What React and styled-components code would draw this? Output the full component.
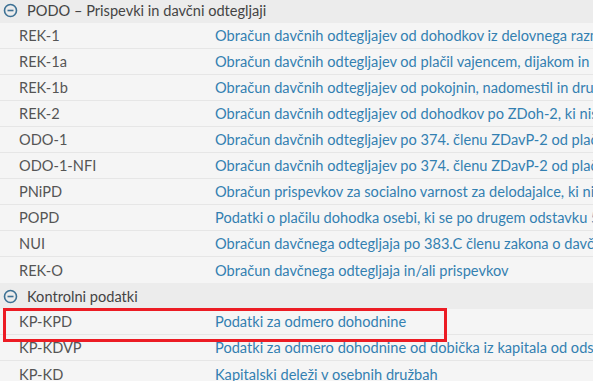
import React from "react";
import styled, { createGlobalStyle } from "styled-components";

const GlobalStyle = createGlobalStyle`
  html, body {
    margin: 0;
    padding: 0;
    background: #f5f5f5;
    overflow: hidden;
  }
  body {
    font-family: Lato, "Open Sans", sans-serif;
  }
`;

const groups = [
  {
    title: "PODO – Prispevki in davčni odtegljaji",
    items: [
      ["REK-1", "Obračun davčnih odtegljajev od dohodkov iz delovnega razmerja"],
      ["REK-1a", "Obračun davčnih odtegljajev od plačil vajencem, dijakom in študentom"],
      ["REK-1b", "Obračun davčnih odtegljajev od pokojnin, nadomestil in drugih dohodkov"],
      ["REK-2", "Obračun davčnih odtegljajev od dohodkov po ZDoh-2, ki niso iz delovnega razmerja"],
      ["ODO-1", "Obračun davčnih odtegljajev po 374. členu ZDavP-2 od plačil"],
      ["ODO-1-NFI", "Obračun davčnih odtegljajev po 374. členu ZDavP-2 od plačil nerezidentom"],
      ["PNiPD", "Obračun prispevkov za socialno varnost za delodajalce, ki niso izplačevalci"],
      ["POPD", "Podatki o plačilu dohodka osebi, ki se po drugem odstavku 58. člena"],
      ["NUI", "Obračun davčnega odtegljaja po 383.C členu zakona o davčnem postopku"],
      ["REK-O", "Obračun davčnega odtegljaja in/ali prispevkov"],
    ],
  },
  {
    title: "Kontrolni podatki",
    items: [
      ["KP-KPD", "Podatki za odmero dohodnine", true],
      ["KP-KDVP", "Podatki za odmero dohodnine od dobička iz kapitala od odsvojitve vrednostnih papirjev"],
      ["KP-KD", "Kapitalski deleži v osebnih družbah"],
    ],
  },
];

const Table = styled.div`
  margin-top: -3px;
  width: 100%;
`;

const GroupHeader = styled.div`
  display: flex;
  align-items: center;
  gap: 9px;
  height: 26px;
  padding-left: 3px;
  background: #ececec;
  color: #444;
  font-size: 14.6px;
  white-space: nowrap;
`;

const Row = styled.div`
  position: relative;
  display: grid;
  grid-template-columns: 215px minmax(0, 1fr);
  align-items: center;
  height: 26px;
  box-sizing: border-box;
  border-bottom: 1px solid #e6e6e6;
  background: #f5f5f5;
  font-size: 14.6px;
  white-space: nowrap;

  &:last-child {
    border-bottom: none;
  }
`;

const Code = styled.span`
  padding-left: 19px;
  color: #555;
`;

const Description = styled.span`
  color: #3380b1;
  overflow: hidden;
`;

/* red frame drawn over the marked row, spilling onto its neighbours */
const Highlight = styled.div`
  position: absolute;
  z-index: 1;
  left: 3px;
  top: -1px;
  width: 444px;
  height: 34px;
  box-sizing: border-box;
  border: 3px solid #ec1c24;
  pointer-events: none;
`;

const CollapseIcon = () => (
  <svg width="15" height="15" viewBox="0 0 15 15">
    <circle cx="7.5" cy="7.5" r="6" fill="none" stroke="#3d7194" strokeWidth="1.6" />
    <line x1="4.5" y1="7.5" x2="10.5" y2="7.5" stroke="#3d7194" strokeWidth="1.6" />
  </svg>
);

export default function App() {
  return (
    <>
      <GlobalStyle />
      <Table>
        {groups.map((group) => (
          <div key={group.title}>
            <GroupHeader>
              <CollapseIcon />
              {group.title}
            </GroupHeader>
            {group.items.map(([code, text, marked]) => (
              <Row key={code}>
                <Code>{code}</Code>
                <Description>{text}</Description>
                {marked && <Highlight />}
              </Row>
            ))}
          </div>
        ))}
      </Table>
    </>
  );
}
